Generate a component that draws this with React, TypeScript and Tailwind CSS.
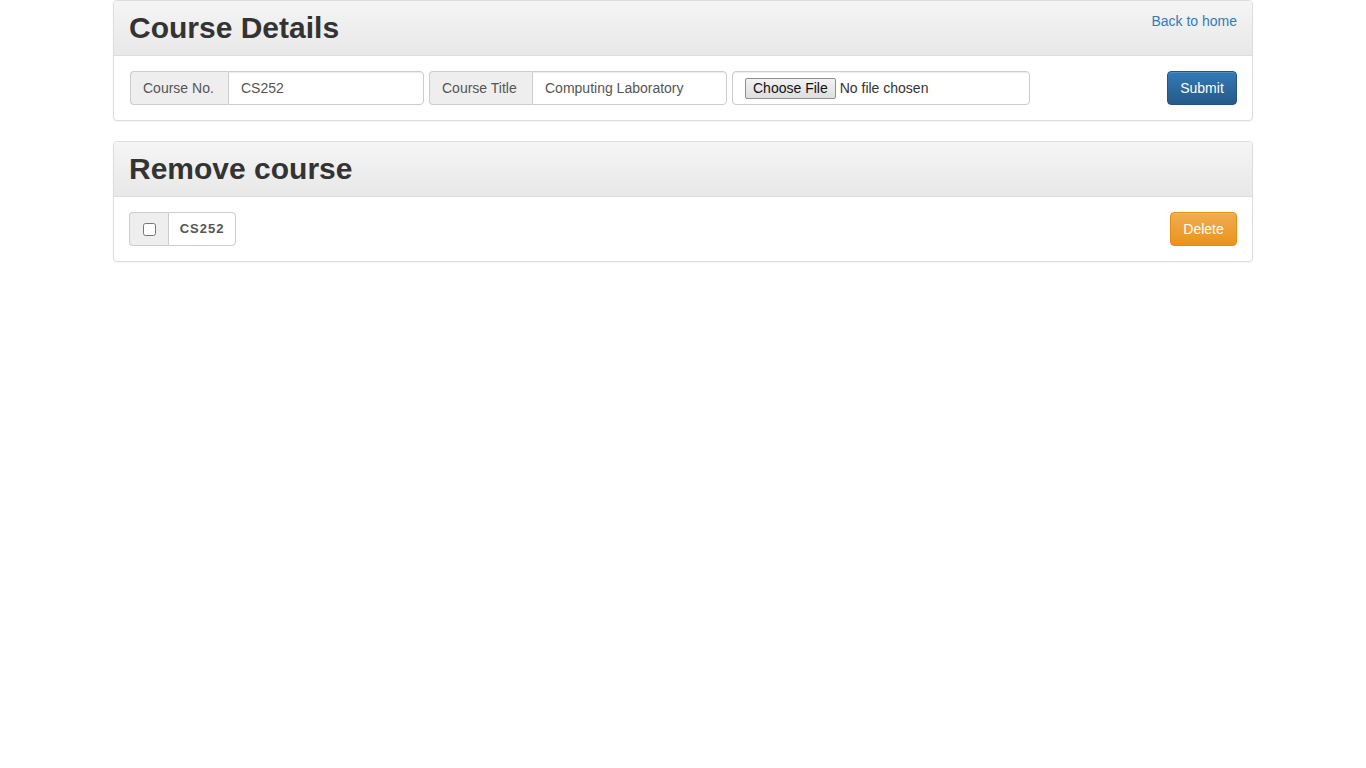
import React from "react";

const font = { fontFamily: '"Liberation Sans", Arial, Helvetica, sans-serif' };

function Panel({ title, right, children }: { title: string; right?: React.ReactNode; children: React.ReactNode }) {
  return (
    <div className="border border-[#dddddd] rounded-[4px] bg-white shadow-[0_1px_2px_rgba(0,0,0,0.05)] overflow-hidden">
      <div className="h-[55px] border-b border-[#dddddd] bg-gradient-to-b from-[#f5f5f5] to-[#e8e8e8] px-[15px] flex justify-between items-start">
        <h2 className="text-[30px] leading-[33px] font-bold text-[#333333] self-center mb-[2px]">{title}</h2>
        {right}
      </div>
      <div className="p-[15px] flex items-center justify-between">{children}</div>
    </div>
  );
}

export default function App() {
  return (
    <div className="w-full min-h-[768px] bg-white text-[14px] text-[#333333]" style={font}>
      <div className="w-[1140px] mx-auto flex flex-col gap-[20px]">
        <Panel
          title="Course Details"
          right={
            <a href="#" className="mt-[10px] text-[14px] leading-[20px] text-[#337ab7]">
              Back to home
            </a>
          }
        >
          <div className="flex items-center gap-[5px] ml-[1px]">
            <div className="flex h-[34px]">
              <span className="flex items-center px-[12px] bg-[#eeeeee] border border-[#cccccc] border-r-0 rounded-l-[4px] text-[#555555] text-[14px] w-[98px]">
                Course No.
              </span>
              <input
                type="text"
                defaultValue="CS252"
                className="w-[196px] h-[34px] px-[12px] border border-[#cccccc] rounded-r-[4px] text-[#555555] text-[14px] outline-none shadow-[inset_0_1px_1px_rgba(0,0,0,0.075)]"
                style={font}
              />
            </div>
            <div className="flex h-[34px]">
              <span className="flex items-center px-[12px] bg-[#eeeeee] border border-[#cccccc] border-r-0 rounded-l-[4px] text-[#555555] text-[14px] w-[103px]">
                Course Title
              </span>
              <input
                type="text"
                defaultValue="Computing Laboratory"
                className="w-[195px] h-[34px] px-[12px] border border-[#cccccc] rounded-r-[4px] text-[#555555] text-[14px] outline-none shadow-[inset_0_1px_1px_rgba(0,0,0,0.075)]"
                style={font}
              />
            </div>
            <div className="w-[298px] h-[34px] border border-[#cccccc] rounded-[4px] flex items-center px-[12px] shadow-[inset_0_1px_1px_rgba(0,0,0,0.075)]">
              <span className="h-[21px] px-[7px] flex items-center border border-[#8f8f8f] rounded-[2px] bg-gradient-to-b from-[#f2f2f2] to-[#dedede] text-[14px] text-[#111111]">
                Choose File
              </span>
              <span className="ml-[4px] text-[14px] text-[#333333]">No file chosen</span>
            </div>
          </div>
          <button className="h-[34px] w-[70px] rounded-[4px] border border-[#245580] bg-gradient-to-b from-[#337ab7] to-[#265a88] text-white text-[14px] shadow-[inset_0_1px_0_rgba(255,255,255,0.15)]">
            Submit
          </button>
        </Panel>
        <Panel title="Remove course">
          <div className="flex h-[34px]">
            <span className="w-[39px] flex items-center justify-center bg-[#eeeeee] border border-[#cccccc] border-r-0 rounded-l-[4px]">
              <input type="checkbox" className="w-[13px] h-[13px] m-0" />
            </span>
            <span className="w-[68px] flex items-center justify-center border border-[#cccccc] rounded-r-[4px] text-[13px] font-bold tracking-[1px] text-[#555555]">
              CS252
            </span>
          </div>
          <button className="h-[34px] w-[67px] rounded-[4px] border border-[#e38d13] bg-gradient-to-b from-[#f0ad4e] to-[#eb9316] text-white text-[14px] shadow-[inset_0_1px_0_rgba(255,255,255,0.15)]">
            Delete
          </button>
        </Panel>
      </div>
    </div>
  );
}
